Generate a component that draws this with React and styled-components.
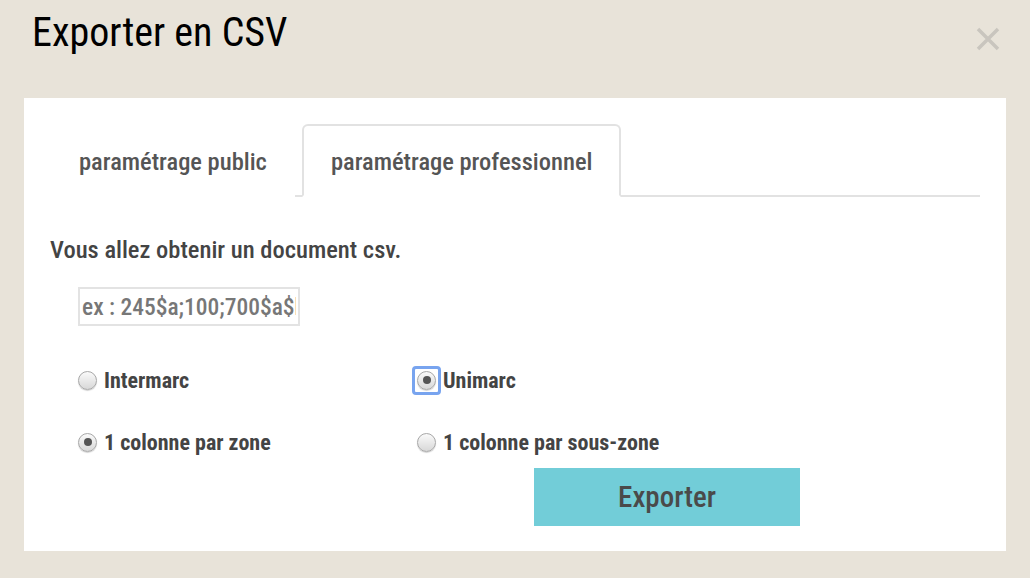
import React, {useState} from "react";
import styled, {createGlobalStyle} from "styled-components";

const Global = createGlobalStyle`
  html, body {
    margin: 0;
    padding: 0;
    background: #e8e3d9;
    font-family: "Roboto", "Liberation Sans", sans-serif;
    font-stretch: 80%;
  }
`;

const Page = styled.div`
  width: 1030px;
  height: 578px;
  box-sizing: border-box;
  padding: 0 24px;
  display: flex;
  flex-direction: column;
`;

const Header = styled.div`
  height: 98px;
  display: flex;
  align-items: flex-start;
  justify-content: space-between;
  padding: 10px 0 0 8px;
  box-sizing: border-box;
`;

const Title = styled.h1`
  margin: 0;
  font-size: 40px;
  font-weight: 400;
  color: #000;
  line-height: 46px;
`;

const Close = styled.button`
  border: none;
  background: none;
  padding: 0;
  margin: 17px 6px 0 0;
  width: 24px;
  height: 24px;
  display: flex;
  cursor: pointer;
`;

const Panel = styled.div`
  background: #fff;
  height: 453px;
  padding: 26px 26px 0 26px;
  box-sizing: border-box;
`;

const Tabs = styled.div`
  display: flex;
  gap: 7px;
  border-bottom: 2px solid #e2e2e2;
  height: 73px;
  box-sizing: border-box;
`;

const Tab = styled.div`
  padding: 2px 26px 0 27px;
  height: 73px;
  box-sizing: border-box;
  display: flex;
  align-items: center;
  font-size: 24.5px;
  color: #555;
  font-weight: 500;
  margin-bottom: -2px;
  border: 2px solid ${p => (p.$active ? "#e2e2e2" : "transparent")};
  border-bottom-color: ${p => (p.$active ? "#fff" : "transparent")};
  border-radius: 6px 6px 0 0;
  background: #fff;
`;

const Info = styled.p`
  margin: 38px 0 0 0;
  font-size: 24.5px;
  line-height: 29px;
  color: #444;
  font-weight: 500;
`;

const Field = styled.input`
  display: block;
  margin: 23px 0 0 28px;
  width: 222px;
  height: 39px;
  box-sizing: border-box;
  border: 2px solid #e3e3e3;
  padding: 0 2px;
  font-family: inherit;
  font-stretch: 80%;
  font-size: 23.5px;
  font-weight: 500;
  color: #333;
  outline: none;
  &::placeholder { color: #777; }
`;

const Grid = styled.div`
  display: grid;
  grid-template-columns: 339px 1fr;
  row-gap: 40px;
  margin: 43px 0 0 28px;
`;

const Option = styled.label`
  display: flex;
  align-items: center;
  gap: 7px;
  font-size: 22px;
  font-weight: 700;
  color: #444;
  height: 22px;
`;

const Dot = styled.span`
  width: 19px;
  height: 19px;
  border-radius: 50%;
  box-sizing: border-box;
  border: 1px solid #a8a8a8;
  background: linear-gradient(#fafafa, #d8d8d8);
  box-shadow: 0 1px 1px rgba(0,0,0,.18);
  display: flex;
  align-items: center;
  justify-content: center;
  flex: none;
  &::after {
    content: "";
    width: 8px;
    height: 8px;
    border-radius: 50%;
    background: ${p => (p.$on ? "#555" : "transparent")};
  }
`;

const FocusRing = styled.span`
  display: inline-flex;
  padding: 2px;
  border: 3px solid #78a4ef;
  border-radius: 4px;
  margin: -5px -5px -5px -5px;
  flex: none;
`;

const Actions = styled.div`
  display: flex;
  margin: 15px 0 0 484px;
`;

const ExportButton = styled.button`
  width: 266px;
  height: 58px;
  background: #72cdd8;
  border: none;
  font-family: inherit;
  font-stretch: 80%;
  font-size: 29px;
  font-weight: 500;
  color: #4a4a4a;
  cursor: pointer;
`;

function Radio({on, focus}) {
  if (focus) {
    return (
      <FocusRing>
        <Dot $on={on} />
      </FocusRing>
    );
  }
  return <Dot $on={on} />;
}

export default function App() {
  const [format] = useState("unimarc");
  const [cols] = useState("zone");
  return (
    <>
      <Global />
      <Page>
        <Header>
          <Title>Exporter en CSV</Title>
          <Close aria-label="Fermer">
            <svg width="24" height="24" viewBox="0 0 24 24">
              <path d="M2 2 L22 22 M22 2 L2 22" stroke="#c9c5be" strokeWidth="3.5" />
            </svg>
          </Close>
        </Header>
        <Panel>
          <Tabs>
            <Tab>paramétrage public</Tab>
            <Tab $active>paramétrage professionnel</Tab>
          </Tabs>
          <Info>Vous allez obtenir un document csv.</Info>
          <Field placeholder="ex : 245$a;100;700$a$b" />
          <Grid>
            <Option><Radio on={format === "intermarc"} />Intermarc</Option>
            <Option><Radio on={format === "unimarc"} focus />Unimarc</Option>
            <Option><Radio on={cols === "zone"} />1 colonne par zone</Option>
            <Option><Radio on={cols === "sous-zone"} />1 colonne par sous-zone</Option>
          </Grid>
          <Actions>
            <ExportButton>Exporter</ExportButton>
          </Actions>
        </Panel>
      </Page>
    </>
  );
}
